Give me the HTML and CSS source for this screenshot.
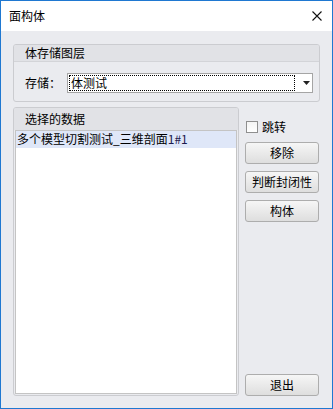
FILE: index.html
```html
<!DOCTYPE html>
<html lang="zh">
<head>
<meta charset="utf-8">
<link rel="stylesheet" href="styles.css">
</head>
<body>
<div class="window">
  <div class="titlebar">
    <span class="title">面构体</span>
    <svg class="close" width="10" height="10" viewBox="0 0 10 10"><path d="M0.5 0.5L9.5 9.5M9.5 0.5L0.5 9.5" stroke="#111" stroke-width="1.1" fill="none"/></svg>
  </div>
  <div class="content">
    <div class="group group-store">
      <div class="group-head">体存储图层</div>
      <div class="store-row">
        <span class="label">存储：</span>
        <div class="combo">
          <div class="combo-text">体测试</div>
          <svg class="combo-arrow" width="7" height="4" viewBox="0 0 7 4"><path d="M0 0H7L3.5 4Z" fill="#222"/></svg>
        </div>
      </div>
    </div>
    <div class="lower">
      <div class="group group-data">
        <div class="group-head head-tall">选择的数据</div>
        <div class="list">
          <div class="item selected">多个模型切割测试_三维剖面<span class="num">1#1</span></div>
        </div>
      </div>
      <div class="side">
        <label class="check"><span class="box"></span>跳转</label>
        <button class="btn btn-first">移除</button>
        <button class="btn">判断封闭性</button>
        <button class="btn">构体</button>
        <div class="spacer"></div>
        <button class="btn">退出</button>
      </div>
    </div>
  </div>
</div>
</body>
</html>
```
FILE: styles.css
```css
* { box-sizing: border-box; }
html, body { margin: 0; padding: 0; background: #ffffff; }
body { font-family: "Noto Sans CJK SC", "Microsoft YaHei", sans-serif; font-size: 12px; color: #000; }
.window {
  width: 333px; height: 409px;
  border: 1px solid #1f78d1;
  display: flex; flex-direction: column;
  background: #eaebef;
}
.titlebar {
  height: 30px; background: #fff;
  display: flex; align-items: center; justify-content: space-between;
  padding: 0 10px 0 8px;
}
.title { font-size: 12px; line-height: 14px; color: #000; }
.close { display: block; margin-top: 0; }
.content {
  flex: 1; padding: 13px 12px 12px 12px;
  display: flex; flex-direction: column;
}
.group {
  border: 1px solid #cbccd0; border-radius: 3px;
  background: #eaebef;
}
.group-store { height: 58px; width: 307px; }
.group-head {
  height: 17px; line-height: 16px;
  background: #e1e2e6; border-bottom: 1px solid #d3d4d8;
  padding-left: 11px; font-size: 12px;
  border-radius: 2px 2px 0 0;
}
.head-tall { height: 22px; line-height: 21px; border-bottom: none; }
.store-row {
  display: flex; align-items: center;
  padding: 11px 6px 0 11px;
}
.label { width: 42px; line-height: 16px; }
.combo {
  width: 246px; height: 20px;
  background: #fff; border: 1px solid #a5a5a5;
  display: flex; align-items: center;
  padding: 1px;
}
.combo-text {
  width: 226px; height: 16px; line-height: 14px;
  border: 1px dotted #000; padding-left: 1px;
}
.combo-arrow { margin-left: 8px; }
.lower {
  flex: 1; display: flex; gap: 6px; margin-top: 5px;
}
.group-data {
  width: 226px; display: flex; flex-direction: column;
  padding-bottom: 1px;
}
.list {
  flex: 1; background: #fff;
  border: 1px solid #c4c4c4; margin: 0 1px;
}
.item { height: 17px; line-height: 16px; padding-left: 1px; white-space: nowrap; }
.selected { background: #dfe7f8; }
.num { color: #1c1a4e; }
.side {
  width: 74px; display: flex; flex-direction: column;
  padding-top: 14px;
}
.check {
  display: flex; align-items: center; gap: 4px;
  height: 12px; line-height: 12px; margin-left: 1px;
}
.box {
  width: 12px; height: 12px;
  border: 1px solid #8f8f8f;
  background: linear-gradient(#f4f4f4, #ffffff);
}
.btn {
  width: 74px; height: 22px;
  font-family: inherit; font-size: 12px; color: #000;
  border: 1px solid #adadad; border-radius: 3px;
  background: linear-gradient(#f6f6f6, #dedede);
  padding: 0; margin: 0 0 7px 0; line-height: 18px;
}
.btn-first { margin-top: 9px; }
.spacer { flex: 1; }
.side .btn:last-child { margin-bottom: 0; }
```
